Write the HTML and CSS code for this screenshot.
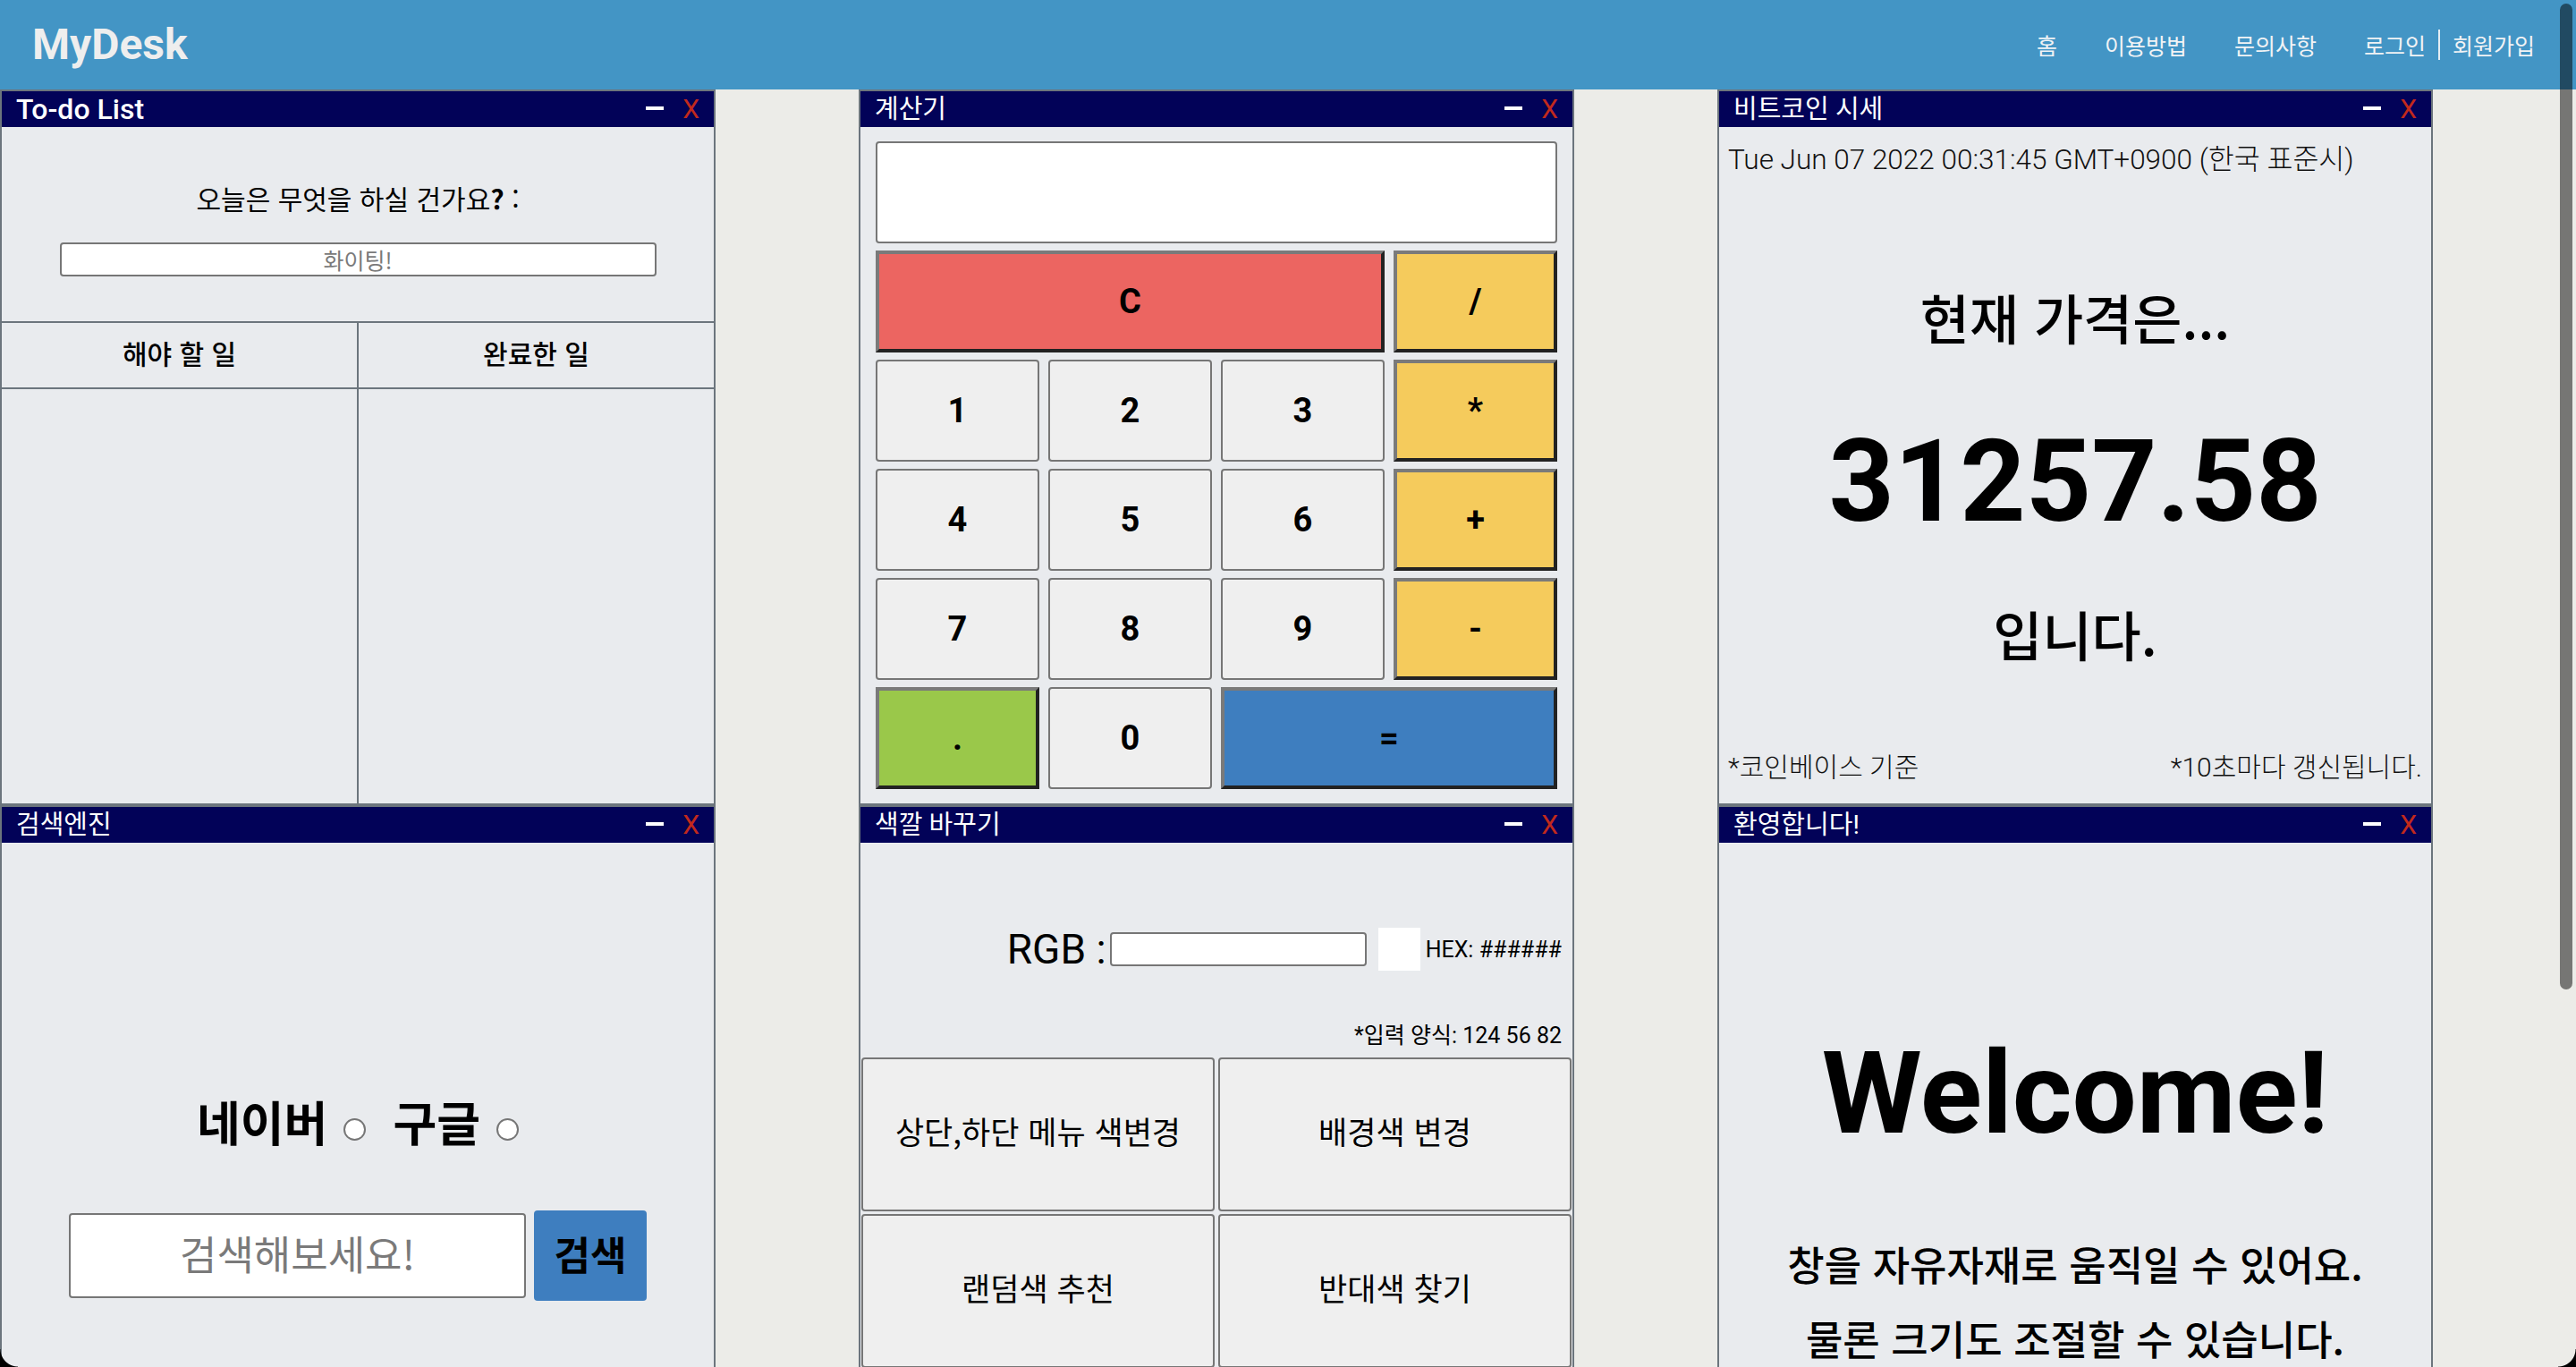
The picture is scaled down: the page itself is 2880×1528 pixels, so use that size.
FILE: index.html
```html
<!DOCTYPE html>
<html lang="ko">
<head>
<meta charset="utf-8">
<title>MyDesk</title>
<link rel="stylesheet" href="styles.css">
</head>
<body>
<header class="topbar">
  <div class="logo">MyDesk</div>
  <nav class="nav">
    <a class="nav-link">홈</a>
    <a class="nav-link">이용방법</a>
    <a class="nav-link">문의사항</a>
    <div class="auth">
      <a class="nav-link">로그인</a>
      <span class="divider"></span>
      <a class="nav-link">회원가입</a>
    </div>
  </nav>
</header>

<main class="desk">
  <div class="column">
    <section class="window">
      <div class="titlebar">
        <span class="title latin">To-do List</span>
        <span class="controls"><span class="min"></span><span class="close">X</span></span>
      </div>
      <div class="todo-body">
        <div class="todo-top">
          <p class="question">오늘은 무엇을 하실 건가요<b>?</b> :</p>
          <input class="todo-input" type="text" placeholder="화이팅!">
        </div>
        <div class="lists">
          <div class="list"><div class="list-head">해야 할 일</div></div>
          <div class="list"><div class="list-head">완료한 일</div></div>
        </div>
      </div>
    </section>

    <section class="window">
      <div class="titlebar">
        <span class="title">검색엔진</span>
        <span class="controls"><span class="min"></span><span class="close">X</span></span>
      </div>
      <div class="search-body">
        <div class="engines">
          <span>네이버</span><input class="radio first" type="radio" name="engine">
          <span>구글</span><input class="radio" type="radio" name="engine">
        </div>
        <div class="search-form">
          <input class="search-input" type="text" placeholder="검색해보세요!">
          <button class="search-btn">검색</button>
        </div>
      </div>
    </section>
  </div>

  <div class="column">
    <section class="window">
      <div class="titlebar">
        <span class="title">계산기</span>
        <span class="controls"><span class="min"></span><span class="close">X</span></span>
      </div>
      <div class="calc">
        <input class="display" type="text">
        <button class="key clear">C</button>
        <button class="key op">/</button>
        <button class="key">1</button>
        <button class="key">2</button>
        <button class="key">3</button>
        <button class="key op">*</button>
        <button class="key">4</button>
        <button class="key">5</button>
        <button class="key">6</button>
        <button class="key op">+</button>
        <button class="key">7</button>
        <button class="key">8</button>
        <button class="key">9</button>
        <button class="key op">-</button>
        <button class="key op dot">.</button>
        <button class="key">0</button>
        <button class="key op eq">=</button>
      </div>
    </section>

    <section class="window">
      <div class="titlebar">
        <span class="title">색깔 바꾸기</span>
        <span class="controls"><span class="min"></span><span class="close">X</span></span>
      </div>
      <div class="color-body">
        <div class="color-top">
          <div class="rgb-row">
            <span class="rgb-label">RGB :</span>
            <input class="rgb-input" type="text">
            <span class="swatch"></span>
            <span class="hex">HEX: ######</span>
          </div>
          <p class="format">*입력 양식: 124 56 82</p>
        </div>
        <div class="color-buttons">
          <button class="color-btn">상단,하단 메뉴 색변경</button>
          <button class="color-btn">배경색 변경</button>
          <button class="color-btn">랜덤색 추천</button>
          <button class="color-btn">반대색 찾기</button>
        </div>
      </div>
    </section>
  </div>

  <div class="column">
    <section class="window">
      <div class="titlebar">
        <span class="title">비트코인 시세</span>
        <span class="controls"><span class="min"></span><span class="close">X</span></span>
      </div>
      <div class="coin-body">
        <div class="date">Tue Jun 07 2022 00:31:45 GMT+0900 (한국 표준시)</div>
        <div class="coin-label">현재 가격은...</div>
        <div class="price">31257.58</div>
        <div class="coin-unit">입니다.</div>
        <div class="coin-foot">
          <span>*코인베이스 기준</span>
          <span>*10초마다 갱신됩니다.</span>
        </div>
      </div>
    </section>

    <section class="window">
      <div class="titlebar">
        <span class="title">환영합니다!</span>
        <span class="controls"><span class="min"></span><span class="close">X</span></span>
      </div>
      <div class="welcome-body">
        <h1 class="welcome-title">Welcome!</h1>
        <p class="welcome-text">창을 자유자재로 움직일 수 있어요.<br>물론 크기도 조절할 수 있습니다.</p>
      </div>
    </section>
  </div>
</main>

<div class="scroll-thumb"></div>
<div class="corner corner-left"></div>
<div class="corner corner-right"></div>
</body>
</html>
```

FILE: styles.css
```css
* { box-sizing: border-box; }

html, body {
  margin: 0;
  height: 100%;
}

body {
  position: relative;
  overflow: hidden;
  background: #ecece8;
  color: #000;
  font-family: Roboto, "Noto Sans CJK KR", sans-serif;
}

/* ---------- header ---------- */
.topbar {
  height: 100px;
  background: #4395c5;
  display: flex;
  align-items: center;
  justify-content: space-between;
  padding: 0 46px 0 36px;
}

.logo {
  font: 700 48px/1 Roboto, sans-serif;
  color: #eeeeee;
}

.nav {
  display: flex;
  align-items: center;
  gap: 53px;
  font: 400 25px/1 "Noto Sans CJK KR", sans-serif;
  color: #f1f3f5;
}

.nav-link { cursor: pointer; }

.auth {
  display: flex;
  align-items: center;
  gap: 14px;
}

.divider {
  width: 2px;
  height: 34px;
  background: #e4edf3;
}

/* ---------- desk ---------- */
.desk {
  display: grid;
  grid-template-columns: repeat(3, 960px);
  height: calc(100vh - 100px);
  overflow: hidden;
}

.column {
  display: flex;
  flex-direction: column;
}

.window {
  flex: none;
  width: 800px;
  height: 800px;
  border: 2px solid #6c757d;
  background: #e9ebee;
  display: flex;
  flex-direction: column;
}

.titlebar {
  flex: none;
  height: 40px;
  background: #020258;
  color: #fff;
  display: flex;
  align-items: center;
  justify-content: space-between;
  padding: 0 16px;
}

.title {
  font: 400 29px/1 Roboto, "Noto Sans CJK KR", sans-serif;
}

.title.latin {
  font-size: 32px;
  font-weight: 500;
}

.controls {
  display: flex;
  align-items: center;
  gap: 21px;
}

.min {
  width: 20px;
  height: 4px;
  background: #fff;
  margin-top: -3px;
}

.close {
  font: 400 30px/1 Roboto, sans-serif;
  color: #c1291c;
}

/* ---------- to-do ---------- */
.todo-body {
  flex: 1;
  display: flex;
  flex-direction: column;
}

.todo-top {
  flex: none;
  height: 217px;
  padding-top: 59px;
  text-align: center;
}

.question {
  margin: 0 0 1px;
  font: 400 30px/40px "Noto Sans CJK KR", sans-serif;
}

.todo-input {
  display: block;
  margin: 30px auto 0;
  width: 667px;
  height: 38px;
  border: 2px solid #767676;
  border-radius: 4px;
  background: #fff;
  text-align: center;
  font: 400 25px "Noto Sans CJK KR", sans-serif;
}

.todo-input::placeholder { color: #7a7a7a; }

.lists {
  flex: 1;
  display: grid;
  grid-template-columns: 399px 397px;
  border-top: 2px solid #6c757d;
}

.list:first-child { border-right: 2px solid #6c757d; }

.list-head {
  height: 74px;
  padding-bottom: 7px;
  border-bottom: 2px solid #6c757d;
  display: flex;
  align-items: center;
  justify-content: center;
  font: 500 30px "Noto Sans CJK KR", sans-serif;
}

/* ---------- search ---------- */
.search-body {
  flex: 1;
  padding-top: 281px;
}

.engines {
  display: flex;
  justify-content: center;
  align-items: center;
  height: 60px;
  font: 700 53px/60px "Noto Sans CJK KR", sans-serif;
}

.radio {
  appearance: none;
  -webkit-appearance: none;
  width: 25px;
  height: 25px;
  margin: 18px 0 0 18px;
  border: 2px solid #767676;
  border-radius: 50%;
  background: #fff;
}

.radio.first { margin-right: 30px; }

.search-form {
  display: flex;
  justify-content: center;
  align-items: center;
  gap: 9px;
  margin-top: 70px;
}

.search-input {
  width: 511px;
  height: 95px;
  padding: 0 0 6px;
  border: 2px solid #767676;
  border-radius: 4px;
  background: #fff;
  text-align: center;
  font: 400 45px "Noto Sans CJK KR", sans-serif;
}

.search-input::placeholder { color: #7a7a7a; }

.search-btn {
  width: 126px;
  height: 101px;
  padding: 0 0 6px;
  border: none;
  border-radius: 4px;
  background: #3e7ebf;
  color: #000;
  font: 700 44px "Noto Sans CJK KR", sans-serif;
}

/* ---------- calculator ---------- */
.calc {
  flex: 1;
  padding: 16px 17px;
  display: grid;
  grid-template-columns: repeat(4, 183px);
  grid-template-rows: repeat(6, 114px);
  gap: 8px 10px;
}

.display {
  grid-column: 1 / -1;
  border: 2px solid #767676;
  border-radius: 4px;
  background: #fff;
}

.key {
  padding: 0;
  background: #efefef;
  border: 2px solid #767676;
  border-radius: 4px;
  color: #000;
  font: 700 38px Roboto, sans-serif;
}

.key.op {
  background: #f5cb5c;
  border: 4px solid;
  border-color: #7a7a7a #222 #222 #7a7a7a;
  border-radius: 0;
}

.key.clear {
  grid-column: span 3;
  background: #ec6561;
  border: 4px solid;
  border-color: #7a7a7a #222 #222 #7a7a7a;
  border-radius: 0;
}

.key.dot { background: #9ac84a; }

.key.eq {
  grid-column: span 2;
  background: #3e7ebf;
}

/* ---------- color ---------- */
.color-body {
  flex: 1;
  display: flex;
  flex-direction: column;
}

.color-top {
  flex: none;
  height: 240px;
  padding: 95px 12px 0 0;
  text-align: right;
}

.rgb-row {
  display: flex;
  justify-content: flex-end;
  align-items: center;
  height: 48px;
}

.rgb-label {
  font: 400 46px/1 Roboto, sans-serif;
  margin-right: 4px;
}

.rgb-input {
  width: 287px;
  height: 38px;
  border: 2px solid #767676;
  border-radius: 4px;
  background: #fff;
}

.swatch {
  width: 47px;
  height: 48px;
  background: #fff;
  margin-left: 13px;
}

.hex {
  margin-left: 6px;
  font: 400 25px/1 Roboto, sans-serif;
}

.format {
  margin: 58px 0 0;
  font: 400 25px/30px Roboto, "Noto Sans CJK KR", sans-serif;
}

.color-buttons {
  display: grid;
  grid-template-columns: 395px 395px;
  grid-auto-rows: 172px;
  gap: 3px 4px;
  padding: 0 1px;
}

.color-btn {
  padding: 0 0 10px;
  background: #efefef;
  border: 2px solid #767676;
  border-radius: 4px;
  color: #000;
  font: 400 35px "Noto Sans CJK KR", sans-serif;
}

/* ---------- bitcoin ---------- */
.coin-body {
  flex: 1;
  display: flex;
  flex-direction: column;
  padding: 17px 10px 0;
}

.date {
  font: 300 31.5px/40px Roboto, "Noto Sans CJK KR", sans-serif;
  color: #111;
}

.coin-label,
.coin-unit {
  text-align: center;
  font: 500 60px/70px "Noto Sans CJK KR", sans-serif;
}

.coin-label { margin-top: 120px; }

.price {
  margin-top: 74px;
  text-align: center;
  font: 700 128px/150px Roboto, sans-serif;
}

.coin-unit { margin-top: 60px; }

.coin-foot {
  margin-top: 95px;
  display: flex;
  justify-content: space-between;
  font: 300 30px/40px Roboto, "Noto Sans CJK KR", sans-serif;
  color: #111;
}

/* ---------- welcome ---------- */
.welcome-body {
  flex: 1;
  padding-top: 205px;
  text-align: center;
}

.welcome-title {
  margin: 0;
  font: 700 128px/150px Roboto, sans-serif;
}

.welcome-text {
  margin: 74px 0 0;
  font: 500 45px/83px "Noto Sans CJK KR", sans-serif;
}

/* ---------- overlays ---------- */
.scroll-thumb {
  position: absolute;
  top: 4px;
  right: 4px;
  width: 14px;
  height: 1102px;
  border-radius: 7px;
  background: rgba(0, 0, 0, 0.5);
}

.corner {
  position: absolute;
  bottom: 0;
  width: 20px;
  height: 20px;
}

.corner-left {
  left: 0;
  background: radial-gradient(circle at 100% 0, transparent 19px, #000 20px);
}

.corner-right {
  right: 0;
  background: radial-gradient(circle at 0 0, transparent 19px, #000 20px);
}
```
